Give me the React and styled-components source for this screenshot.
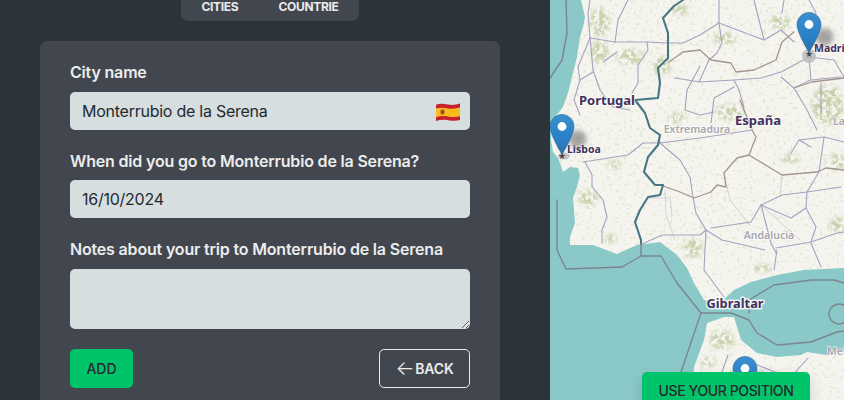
import React from 'react'
import styled, { createGlobalStyle } from 'styled-components'

const GlobalStyle = createGlobalStyle`
  * { box-sizing: border-box; margin: 0; padding: 0; }
  html, body { height: 100%; overflow: hidden; }
  body {
    font-family: Inter, "Noto Sans", sans-serif;
    color: #ececec;
    background: #2d3439;
  }
`

const SEA = 'M0 0 L31 0 L35 17 L33 27 L30 37 L27 57 L22 77 L18 93 L13 107 L5 117 L1 125 L1 140 L3 152 L8 158 L10 163 L13 172 L20 167 L28 168 L30 175 L27 187 L23 198 L25 223 L20 237 L20 245 L43 245 L67 254 L87 245 L110 242 L127 255 L137 268 L144 283 L154 300 L170 303 L184 290 L201 282 L227 275 L254 270 L294 268 L294 350 L277 355 L257 352 L251 355 L227 357 L207 353 L191 340 L184 317 L174 317 L157 323 L154 340 L144 367 L141 400 L0 400 Z'

const COUNTRY_BORDER = 'M133 0 L124 6 L113 18 L118 33 L118 58 L108 68 L110 83 L108 98 L85 100 L95 113 L100 128 L110 135 L108 145 L98 157 L94 172 L105 185 L113 185 L110 195 L98 197 L90 210 L85 222 L91 240 L91 243'

const SEA_LINES = [
  'M16 0 L17 33 L12 60 L0 78',
  'M7 200 L7 250 L16 269 L72 267 L91 256 L111 256 L127 283 L151 313 L181 313 L199 320 L207 333 L227 345 L261 342 L287 332 L294 331',
  'M151 313 L131 372 L124 400',
  'M199 313 L199 300 L224 285 L261 280 L284 280 L294 283',
  'M91 243 L91 256',
]

const ROADS = [
  'M40 0 L38 13 L40 37 L43 70 L50 90 L63 107 L80 110',
  'M78 0 L68 20 L65 42 L40 38',
  'M65 42 L97 42 L117 43 L133 43 L150 35 L169 23',
  'M97 42 L98 50 L88 65 L88 83 L82 93',
  'M40 38 L28 67 L30 80 L43 72',
  'M67 52 L53 62',
  'M30 80 L24 100 L30 115',
  'M125 78 L150 82 L184 80 L211 78 L231 72 L259 57',
  'M150 66 L137 90 L135 110 L150 115 L164 112',
  'M169 0 L169 23 L172 43 L167 53 L159 60 L149 82',
  'M169 23 L214 40 L231 30 L244 42',
  'M204 0 L214 40',
  'M259 57 L261 80 L244 88 L231 77',
  'M261 80 L291 77',
  'M259 57 L284 60 L294 77',
  'M244 88 L257 110 L267 130',
  'M271 83 L271 113',
  'M184 80 L189 90 L194 107',
  'M184 87 L164 98 L161 123',
  'M234 0 L232 13',
  'M259 0 L266 13 L262 34',
  'M33 162 L78 155 L93 143 L110 143 L150 138 L202 130',
  'M35 162 L42 175 L42 187 L53 200 L57 217 L52 230 L52 243',
  'M110 143 L130 160 L140 177 L143 197 L146 213 L156 230',
  'M90 245 L112 235 L150 235 L156 230',
  'M161 228 L201 222 L211 205 L232 195 L257 192 L291 187',
  'M211 205 L221 243 L226 253',
  'M257 192 L256 208 L266 227 L261 242 L226 248',
  'M256 208 L241 218 L211 205',
  'M257 192 L269 172 L274 137 L294 142',
  'M274 137 L249 140 L241 153',
  'M249 140 L261 147',
  'M261 242 L287 233 L294 232',
  'M156 230 L172 240 L215 250',
  'M156 230 L154 270 L174 297',
  'M227 250 L224 270',
  'M261 243 L271 267',
  'M178 355 L172 372 L178 400',
  'M200 362 L240 378 L258 358',
]

const FAINT_LINES = [
  'M98 198 L120 198 L122 217',
  'M174 173 L180 200 L200 225',
  'M232 175 L230 195',
  'M115 190 L116 215 L125 240',
  'M211 205 L230 222 L250 240',
]

const PROVINCE_LINES = [
  'M119 62 L133 52 L150 50 L161 60 L181 63 L186 72 L204 70 L226 60 L232 42 L244 32',
  'M113 186 L130 192 L144 198 L161 192 L167 185 L176 187 L174 173 L187 158 L199 155 L206 137 L202 130 L190 100',
  'M199 155 L232 175 L267 172 L276 168 L294 170',
  'M244 88 L262 82 L294 78',
]

// darker olive patches of the base map
const GREENS = [
  [50, 22, 10, 14], [50, 52, 9, 12], [80, 57, 14, 8], [112, 66, 9, 10],
  [130, 10, 10, 5], [230, 22, 10, 8], [175, 38, 12, 6], [278, 105, 16, 20],
  [180, 112, 14, 8], [128, 118, 9, 6], [38, 198, 10, 8], [60, 238, 8, 4],
  [142, 248, 10, 10], [212, 268, 10, 4], [288, 225, 9, 8], [172, 340, 12, 10],
  [158, 362, 8, 5], [240, 158, 10, 5], [286, 162, 10, 8], [64, 165, 8, 4],
]

const Pin = ({ x, y }) => (
  <g transform={`translate(${x - 12.5} ${y - 41})`}>
    <ellipse cx="28" cy="25" rx="9" ry="9" fill="#555" opacity="0.5" filter="url(#soft)" />
    <path
      d="M12.5 0.5C5.9 0.5 0.5 5.9 0.5 12.5C0.5 21 12.5 40.5 12.5 40.5S24.5 21 24.5 12.5C24.5 5.9 19.1 0.5 12.5 0.5Z"
      fill="url(#pinBlue)"
      stroke="#2e6c97"
      strokeWidth="0.6"
    />
    <circle cx="12.5" cy="12.5" r="4.4" fill="#fff" />
  </g>
)

const WorldMap = () => (
  <MapSvg viewBox="0 0 294 400" preserveAspectRatio="none">
    <defs>
      <linearGradient id="pinBlue" x1="0" y1="0" x2="0" y2="1">
        <stop offset="0" stopColor="#3a8fd0" />
        <stop offset="0.6" stopColor="#2a80c8" />
        <stop offset="1" stopColor="#2c6fa6" />
      </linearGradient>
      <filter id="soft" x="-40%" y="-40%" width="180%" height="180%">
        <feGaussianBlur stdDeviation="2.5" />
      </filter>
      <filter id="crisp">
        <feGaussianBlur stdDeviation="0.25" />
      </filter>
      <filter id="speckle" x="0" y="0" width="100%" height="100%">
        <feTurbulence type="fractalNoise" baseFrequency="0.3" numOctaves="2" seed="11" />
        <feColorMatrix
          type="matrix"
          values="0 0 0 0 0.70  0 0 0 0 0.78  0 0 0 0 0.58  0 0 0 16 -10"
        />
      </filter>
      <filter id="patchy" filterUnits="userSpaceOnUse" x="0" y="0" width="294" height="400">
        <feGaussianBlur in="SourceGraphic" stdDeviation="2.5" result="blurred" />
        <feTurbulence type="fractalNoise" baseFrequency="0.22" numOctaves="3" seed="4" />
        <feColorMatrix
          type="matrix"
          values="0 0 0 0 0  0 0 0 0 0  0 0 0 0 0  0 0 0 7 -2.9"
          result="grain"
        />
        <feComposite in="blurred" in2="grain" operator="in" />
      </filter>
    </defs>

    <rect width="294" height="400" fill="#f6f4ef" />
    <g filter="url(#patchy)" fill="#bcc99c" opacity="0.8">
      {GREENS.map(([cx, cy, rx, ry]) => (
        <ellipse key={`${cx}-${cy}`} cx={cx} cy={cy} rx={rx} ry={ry} />
      ))}
    </g>
    <rect width="294" height="400" filter="url(#speckle)" opacity="0.6" />
    <path d={SEA} fill="#8bc9c9" />

    <g fill="none" strokeLinejoin="round" strokeLinecap="round" filter="url(#crisp)">
      {FAINT_LINES.map(d => <path key={d} d={d} stroke="#c9c8d2" strokeWidth="0.8" />)}
      {ROADS.map(d => <path key={d} d={d} stroke="#a7a1c0" strokeWidth="1.1" />)}
      {PROVINCE_LINES.map(d => <path key={d} d={d} stroke="#a3968f" strokeWidth="1.3" />)}
      {SEA_LINES.map(d => <path key={d} d={d} stroke="#7a8590" strokeWidth="1.4" />)}
      <circle cx="289" cy="314" r="10" stroke="#7a8590" strokeWidth="1.4" />
      <path d={COUNTRY_BORDER} stroke="#467684" strokeWidth="2.1" />
    </g>

    <CityBlob cx="259" cy="56" rx="7" ry="7" />
    <CityBlob cx="14" cy="156" rx="6" ry="3.5" />

    <PlaceLabel x="57" y="105" $size={13} $anchor="middle">Portugal</PlaceLabel>
    <PlaceLabel x="208" y="125" $size={13} $anchor="middle">España</PlaceLabel>
    <PlaceLabel x="147" y="133" $size={10.5} $anchor="middle" $muted>Extremadura</PlaceLabel>
    <PlaceLabel x="219" y="239" $size={10.5} $anchor="middle" $muted>Andalucia</PlaceLabel>
    <PlaceLabel x="283" y="125" $size={10.5} $muted>La</PlaceLabel>
    <PlaceLabel x="277" y="355" $size={10.5} $muted>Mel</PlaceLabel>
    <PlaceLabel x="185" y="308" $size={12.8} $anchor="middle" $halo={3}>Gibraltar</PlaceLabel>
    <PlaceLabel x="17" y="153" $size={10.5}>Lisboa</PlaceLabel>
    <PlaceLabel x="264" y="52" $size={10.5}>Madrid</PlaceLabel>

    <Star x="259" y="57">★</Star>
    <Star x="12" y="159">★</Star>

    <Pin x={259} y={53} />
    <Pin x={12} y={155} />
    <Pin x={195} y={397} />
  </MapSvg>
)

const SpainFlag = () => (
  <FlagIcon viewBox="0 0 24 18">
    <path d="M0 2C4 0 8 1 12 1.6S20 2 24 0.6V17C20 18.2 16 17.8 12 17.2S4 16.6 0 18Z" fill="#c8202c" />
    <path d="M0 5.6C4 4 8 4.8 12 5.4S20 5.8 24 4.6V13.2C20 14.4 16 14 12 13.4S4 12.8 0 14.2Z" fill="#f5bd1d" />
    <rect x="4.5" y="6.6" width="4" height="5" rx="1" fill="#b4642a" />
    <rect x="5.6" y="7.8" width="1.8" height="2.4" fill="#8f2a24" />
  </FlagIcon>
)

export default function App() {
  return (
    <>
      <GlobalStyle />
      <Layout>
        <Sidebar>
          <Tabs>
            <TabLink>Cities</TabLink>
            <TabLink>Countrie</TabLink>
          </Tabs>
          <FormCard>
            <Field>
              <Label htmlFor="city">City name</Label>
              <InputWrap>
                <TextInput id="city" defaultValue="Monterrubio de la Serena" />
                <SpainFlag />
              </InputWrap>
            </Field>
            <Field>
              <Label htmlFor="date">When did you go to Monterrubio de la Serena?</Label>
              <TextInput id="date" defaultValue="16/10/2024" />
            </Field>
            <Field>
              <Label htmlFor="notes">Notes about your trip to Monterrubio de la Serena</Label>
              <NotesInput id="notes" />
            </Field>
            <Actions>
              <AddButton type="button">Add</AddButton>
              <BackButton type="button"><BackArrow>←</BackArrow> Back</BackButton>
            </Actions>
          </FormCard>
        </Sidebar>
        <MapPane>
          <WorldMap />
          <PositionButton type="button">Use your position</PositionButton>
        </MapPane>
      </Layout>
    </>
  )
}

const Layout = styled.div`
  display: flex;
  width: 844px;
  height: 400px;
  overflow: hidden;
`

const Sidebar = styled.aside`
  flex: 0 0 550px;
  display: flex;
  flex-direction: column;
  align-items: center;
  padding: 0 50px 0 40px;
  background: #2d3439;
`

const Tabs = styled.nav`
  flex: none;
  display: flex;
  gap: 40px;
  height: 30px;
  margin: -9px 0 20px;
  padding: 0 20px;
  align-items: center;
  background: #42474f;
  border-radius: 7px;
`

const TabLink = styled.span`
  font-size: 12px;
  font-weight: 700;
  letter-spacing: -0.3px;
  color: #ececec;
  text-transform: uppercase;
`

const FormCard = styled.form`
  flex: none;
  width: 460px;
  height: 400px;
  display: flex;
  flex-direction: column;
  gap: 20px;
  padding: 20px 30px;
  background: #42474f;
  border-radius: 7px;
`

const Field = styled.div`
  display: flex;
  flex-direction: column;
  gap: 8px;
`

const Label = styled.label`
  font-size: 16px;
  font-weight: 600;
  line-height: 22.5px;
  letter-spacing: -0.18px;
  color: #ececec;
`

const InputWrap = styled.div`
  position: relative;
`

const TextInput = styled.input`
  display: block;
  width: 100%;
  height: 38px;
  padding: 0 12px;
  border: none;
  border-radius: 5px;
  background: #d6dee0;
  color: #242a2e;
  font: 400 16px Inter, "Noto Sans", sans-serif;
  letter-spacing: -0.25px;
`

const NotesInput = styled.textarea`
  display: block;
  width: 100%;
  height: 60px;
  padding: 8px 12px;
  border: none;
  border-radius: 5px;
  background: #d6dee0;
  color: #242a2e;
  font: 400 16px Inter, "Noto Sans", sans-serif;
`

const FlagIcon = styled.svg`
  position: absolute;
  top: 11px;
  right: 10px;
  width: 24px;
  height: 18px;
`

const Actions = styled.div`
  display: flex;
  justify-content: space-between;
  align-items: stretch;
`

const AddButton = styled.button`
  width: 63px;
  height: 39px;
  border: none;
  border-radius: 5px;
  background: #00c46a;
  color: #242a2e;
  font: 500 14px Inter, "Noto Sans", sans-serif;
  text-transform: uppercase;
`

const BackButton = styled.button`
  display: flex;
  align-items: center;
  justify-content: center;
  gap: 1px;
  width: 91px;
  height: 39px;
  border: 1px solid #ececec;
  border-radius: 5px;
  background: transparent;
  color: #ececec;
  font: 600 14px Inter, "Noto Sans", sans-serif;
  letter-spacing: -0.2px;
  text-transform: uppercase;
`

const BackArrow = styled.span`
  font-size: 20px;
  font-weight: 300;
  line-height: 1;
`

const MapPane = styled.main`
  position: relative;
  flex: 1;
  min-width: 0;
  height: 400px;
  overflow: hidden;
`

const MapSvg = styled.svg`
  display: block;
  width: 100%;
  height: 100%;
`

const CityBlob = styled.ellipse`
  fill: #b9b6be;
  opacity: 0.8;
`

const PlaceLabel = styled.text`
  font-family: "Noto Sans", "Open Sans", sans-serif;
  font-size: ${p => p.$size}px;
  font-weight: ${p => (p.$muted ? 600 : 700)};
  text-anchor: ${p => p.$anchor || 'start'};
  fill: ${p => (p.$muted ? '#a8a6ae' : '#42305c')};
  stroke: #fff;
  stroke-width: ${p => p.$halo || 1.5}px;
  stroke-opacity: 0.8;
  stroke-linejoin: round;
  paint-order: stroke;
`

const Star = styled.text`
  font-family: "DejaVu Sans", sans-serif;
  font-size: 9px;
  text-anchor: middle;
  fill: #444;
`

const PositionButton = styled.button`
  position: absolute;
  left: 92px;
  top: 372px;
  width: 168px;
  height: 36px;
  border: none;
  border-radius: 5px;
  background: #00c46a;
  color: #242a2e;
  font: 500 14px Inter, "Noto Sans", sans-serif;
  letter-spacing: -0.4px;
  text-transform: uppercase;
  box-shadow: 0 6px 14px rgba(0, 0, 0, 0.16);
`
